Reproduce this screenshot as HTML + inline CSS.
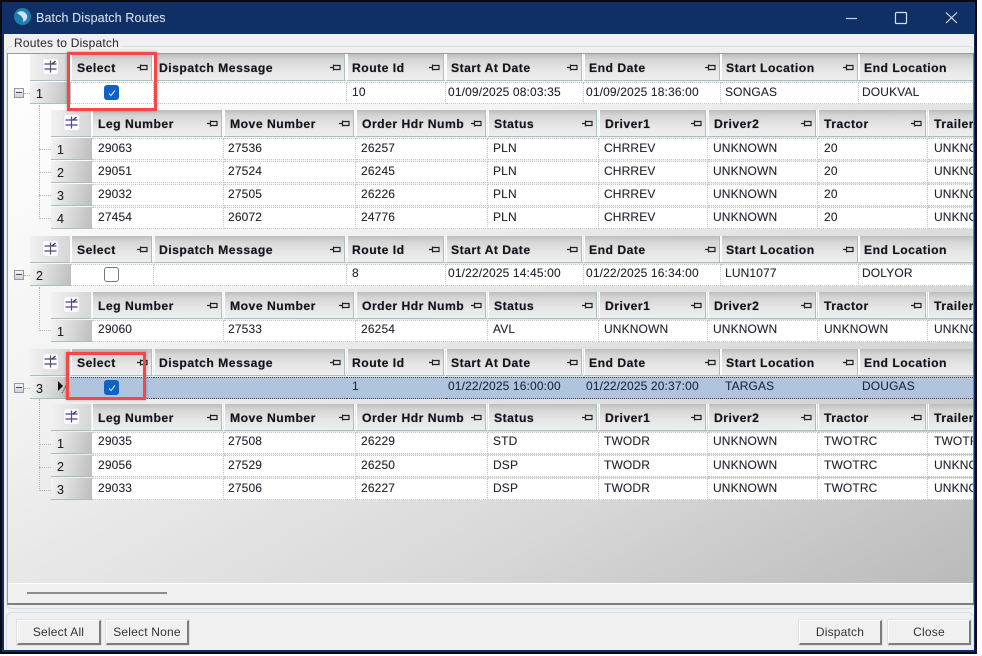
<!DOCTYPE html>
<html><head><meta charset="utf-8"><title>Batch Dispatch Routes</title>
<style>
html,body{margin:0;padding:0;background:#fff}
body{width:982px;height:656px;overflow:hidden;position:relative;font-family:"Liberation Sans",Arial,sans-serif;font-size:12px;color:#222}
div,span,svg{position:absolute;box-sizing:border-box}
#win{left:0;top:0;width:977px;height:654px;background:#f0f0f0;border:2px solid #0a0a14;overflow:hidden}
#win:before{content:"";position:absolute;left:0;top:0;bottom:0;width:2px;background:#0f2f66}
#win:after{content:"";position:absolute;right:0;top:0;bottom:0;width:1px;background:#0f2f66}
#bot{left:0;right:0;bottom:0;height:2px;background:#0f2f66;z-index:3}
#tb{left:0;top:0;right:0;height:32px;background:#0f2f66;z-index:2}
#ttl{left:34px;top:9px;font-size:12.5px;color:#d7dfea;white-space:nowrap;letter-spacing:.12px;text-shadow:0 0 .6px rgba(215,223,234,.5)}
#gb1{left:4px;top:44px;width:968px;height:563px;border:1px solid #d5dfe6;border-radius:5px}
#lbl{left:10px;top:34px;background:#f0f0f0;padding:0 2px;font-size:12px;line-height:14px;white-space:nowrap;letter-spacing:.2px;color:#333;z-index:1;text-shadow:0 0 .5px rgba(50,50,50,.4)}
#gb2{left:4px;top:610px;width:968px;height:50px;border:1px solid #d5dfe6;border-radius:6px}
#grid{left:5px;top:51px;width:968px;height:552px;background:#f0f0f0;border:1px solid #6f6f6f;border-width:1px 2px 2px 1px;border-color:#9a9a9a #808080 #808080 #9a9a9a;overflow:hidden}
#bg{left:0;top:0;right:0;bottom:20px;background:linear-gradient(150deg,#ffffff 0%,#f4f4f4 30%,#d8d8d8 72%,#bababa 100%)}
#sb{left:0;right:0;bottom:0;height:20px;background:#f0f0f0;border-top:1px solid #fff}
#th{left:19px;top:8px;width:140px;height:2px;background:#8c8c8c}
.ph,.cp,.rp,.rc{left:0;width:966px;height:0}
.hc{top:0;height:26px;background:linear-gradient(#bdbdbd 0,#d6d6d6 6px,#e6e6e6 16px,#eeeeee 26px);border-right:1px solid #fff;border-left:1px solid #fff;box-shadow:0 1px 0 #a7c0bf,inset -1px 0 0 #a9c0c0;font-weight:bold;font-size:12.2px;letter-spacing:.48px;line-height:28px;padding-left:5px;white-space:nowrap;color:#14141c;overflow:hidden;text-shadow:0 0 .7px rgba(20,20,28,.7)}
.hc svg{right:4px;top:10px;width:11px;height:7px}
.ch{top:0;height:26px;background:linear-gradient(90deg,#f1f1f1,#d6d6d6);box-shadow:0 1px 0 #a7c0bf}
.ch svg{left:12px;top:4px;width:17px;height:17px}
.ph .ch{left:22px;width:40px}
.cp .ch{left:43px;width:40px}
.ph .hc:nth-of-type(2){left:63px;width:82px}
.ph .hc:nth-of-type(3){left:146px;width:192px;padding-left:4px}
.ph .hc:nth-of-type(4){left:339px;width:98px;padding-left:4px}
.ph .hc:nth-of-type(5){left:438px;width:137px;padding-left:4px}
.ph .hc:nth-of-type(6){left:576px;width:137px;padding-left:4px}
.ph .hc:nth-of-type(7){left:713px;width:138px;padding-left:4px}
.ph .hc:nth-of-type(8){left:851px;width:120px;padding-left:4px}
.cp .hc:nth-of-type(2){left:84px;width:131px}
.cp .hc:nth-of-type(3){left:216px;width:131px}
.cp .hc:nth-of-type(4){left:348px;width:131px}
.cp .hc:nth-of-type(5){left:480px;width:110px}
.cp .hc:nth-of-type(6){left:591px;width:108px}
.cp .hc:nth-of-type(7){left:700px;width:109px}
.cp .hc:nth-of-type(8){left:810px;width:109px}
.cp .hc:nth-of-type(9){left:920px;width:60px}
.dc{top:0;height:22px;background:#fff;border:1px dotted #c6c6c6;border-left:0;line-height:18px;padding-left:2px;font-size:12px;letter-spacing:.14px;white-space:nowrap;overflow:hidden;color:#23232e;text-shadow:0 0 .5px rgba(35,35,46,.45)}
.rh{top:0;height:21px;background:linear-gradient(100deg,#f4f4f4,#bdbdbd);box-shadow:0 1px 0 #a7c0bf;font-size:12.5px;line-height:24px;padding-left:6px;color:#222;text-shadow:0 0 .5px rgba(35,35,46,.45)}
.rp .rh{left:22px;width:41px}
.rc .rh{left:43px;width:41px}
.rp .dc{padding-left:3px;line-height:16px}
.rp.first .dc{line-height:18px}
.rp .dc:nth-of-type(2){left:63px;width:83px}
.rp .dc:nth-of-type(3){left:146px;width:193px}
.rp .dc:nth-of-type(4){left:339px;width:99px;padding-left:5px}
.rp .dc:nth-of-type(5){left:438px;width:138px;padding-left:2px}
.rp .dc:nth-of-type(6){left:576px;width:137px;padding-left:2px}
.rp .dc:nth-of-type(7){left:713px;width:138px;padding-left:4px}
.rp .dc:nth-of-type(8){left:851px;width:120px}
.rc .dc{padding-left:5px}
.rc .dc:nth-of-type(2){left:84px;width:132px;padding-left:6px}
.rc .dc:nth-of-type(3){left:216px;width:132px;padding-left:4px}
.rc .dc:nth-of-type(4){left:348px;width:132px}
.rc .dc:nth-of-type(5){left:480px;width:111px}
.rc .dc:nth-of-type(6){left:591px;width:109px}
.rc .dc:nth-of-type(7){left:700px;width:110px}
.rc .dc:nth-of-type(8){left:810px;width:110px;padding-left:6px}
.rc .dc:nth-of-type(9){left:920px;width:60px;padding-left:6px}
.rc.up .dc{line-height:17px}
.sel .dc{background:#b0c4de;border:1px dotted #444;border-width:1px 0;color:#1c2a44}
.chk{left:33px;top:2px;width:15px;height:15px;border-radius:3px}
.on{background:#0f62c4}
.off{background:#fff;border:1.5px solid #777;border-radius:3px}
.chk svg{left:3.500px;top:3.500px;width:8px;height:8px}
.exp{left:6px;width:10px;height:10px;background:linear-gradient(#f4f4f4,#d2d2d2);border:1px solid #8f9aa5}
.exp:after{content:"";position:absolute;left:1px;top:3px;width:6px;height:1px;background:#33506f}
.v,.hl{border:0 dotted #b4b4b4}
.v{width:0;border-left-width:1px;left:31px}
.hl{height:0;border-top-width:1px}
.red{border:3px solid #f44848;z-index:5;box-shadow:0 0 3px rgba(0,0,0,.3)}
.btn{height:25px;top:618px;background:#f0f0f0;border:1px solid #fff;border-right:2px solid #7d7d7d;border-bottom:2px solid #7d7d7d;box-shadow:0 0 0 .5px #cfcfcf;font-size:12px;text-align:center;line-height:23px;letter-spacing:.2px;color:#333}
</style></head><body>
<svg width="0" height="0" style="left:0;top:0"><defs>
<symbol id="pin" viewBox="0 0 11 7"><path d="M0 3.500H3.500M3.500 .5V6.500M3.500 1.500H10V5.500H3.500" fill="none" stroke="#222" stroke-width="1.200"/></symbol>
<symbol id="cho" viewBox="0 0 17 17"><rect x=".5" y=".5" width="16" height="16" rx="3" fill="#fbfbff" stroke="#e2e2ea"/><path d="M2.500 6H14.500M2.500 11H14.500" stroke="#6a5fa6" stroke-width="1.400"/><path d="M8.500 2.500V14.500" stroke="#555" stroke-width="1.200"/><path d="M10 6L13.500 3" stroke="#333" stroke-width="1.200"/></symbol>
<symbol id="tick" viewBox="0 0 8 8"><path d="M1 4.500L3 6.500L7 1.500" fill="none" stroke="#cfe2f7" stroke-width="1.100"/></symbol>
</defs></svg>
<div id="win">
<div id="tb">
<svg style="left:11px;top:5px;width:19px;height:19px" viewBox="0 0 19 19"><circle cx="9.500" cy="9.500" r="8.500" fill="#1f7eb0"/><path d="M4 6C7 3 12 4 14 8C15 11 13 14 10 15C11 12 9 9 4 6Z" fill="#cfe3ee"/></svg>
<div id="ttl">Batch Dispatch Routes</div>
<svg style="left:840px;top:8px;width:120px;height:16px" viewBox="0 0 120 16"><path d="M4 8.500H15" stroke="#c7d0dd" stroke-width="1.200"/><rect x="53.500" y="2.500" width="11" height="11" rx="1" fill="none" stroke="#d7dfea" stroke-width="1.200"/><path d="M104 2.500L115 13M115 2.500L104 13" stroke="#d7dfea" stroke-width="1.200"/></svg>
</div>
<div id="gb1"></div><div id="lbl">Routes to Dispatch</div>
<div id="gb2"></div>
<div id="grid">
<div id="bg"></div>
<div id="sb"><div id="th"></div></div>

<div class="v" style="top:51px;height:114px"></div>
<div class="hl" style="left:31px;top:95px;width:12px"></div><div class="hl" style="left:31px;top:118px;width:12px"></div><div class="hl" style="left:31px;top:141px;width:12px"></div><div class="hl" style="left:31px;top:164px;width:12px"></div>
<div class="hl" style="left:16px;top:39px;width:6px"></div>
<div class="v" style="top:233px;height:44px"></div><div class="hl" style="left:31px;top:276px;width:12px"></div>
<div class="hl" style="left:16px;top:221px;width:6px"></div>
<div class="v" style="top:345px;height:92px"></div>
<div class="hl" style="left:31px;top:390px;width:12px"></div><div class="hl" style="left:31px;top:413px;width:12px"></div><div class="hl" style="left:31px;top:436px;width:12px"></div>
<div class="hl" style="left:16px;top:334px;width:6px"></div>
<div class="exp" style="top:34px"></div><div class="exp" style="top:216px"></div><div class="exp" style="top:329px"></div>

<div class="ph" style="top:0"><div class="ch"><svg><use href="#cho"/></svg></div><div class="hc">Select<svg><use href="#pin"/></svg></div><div class="hc">Dispatch Message<svg><use href="#pin"/></svg></div><div class="hc">Route Id<svg><use href="#pin"/></svg></div><div class="hc">Start At Date<svg><use href="#pin"/></svg></div><div class="hc">End Date<svg><use href="#pin"/></svg></div><div class="hc">Start Location<svg><use href="#pin"/></svg></div><div class="hc">End Location</div></div>
<div class="rp first" style="top:28px"><div class="rh">1</div><div class="dc"><div class="chk on"><svg><use href="#tick"/></svg></div></div><div class="dc"></div><div class="dc">10</div><div class="dc">01/09/2025 08:03:35</div><div class="dc">01/09/2025 18:36:00</div><div class="dc">SONGAS</div><div class="dc">DOUKVAL</div></div>
<div class="cp" style="top:56px"><div class="ch"><svg><use href="#cho"/></svg></div><div class="hc">Leg Number<svg><use href="#pin"/></svg></div><div class="hc">Move Number<svg><use href="#pin"/></svg></div><div class="hc">Order Hdr Numb<svg><use href="#pin"/></svg></div><div class="hc">Status<svg><use href="#pin"/></svg></div><div class="hc">Driver1<svg><use href="#pin"/></svg></div><div class="hc">Driver2<svg><use href="#pin"/></svg></div><div class="hc">Tractor<svg><use href="#pin"/></svg></div><div class="hc">Trailer</div></div>
<div class="rc" style="top:84px"><div class="rh">1</div><div class="dc">29063</div><div class="dc">27536</div><div class="dc">26257</div><div class="dc">PLN</div><div class="dc">CHRREV</div><div class="dc">UNKNOWN</div><div class="dc">20</div><div class="dc">UNKNOWN</div></div>
<div class="rc" style="top:107px"><div class="rh">2</div><div class="dc">29051</div><div class="dc">27524</div><div class="dc">26245</div><div class="dc">PLN</div><div class="dc">CHRREV</div><div class="dc">UNKNOWN</div><div class="dc">20</div><div class="dc">UNKNOWN</div></div>
<div class="rc" style="top:130px"><div class="rh">3</div><div class="dc">29032</div><div class="dc">27505</div><div class="dc">26226</div><div class="dc">PLN</div><div class="dc">CHRREV</div><div class="dc">UNKNOWN</div><div class="dc">20</div><div class="dc">UNKNOWN</div></div>
<div class="rc" style="top:153px"><div class="rh">4</div><div class="dc">27454</div><div class="dc">26072</div><div class="dc">24776</div><div class="dc">PLN</div><div class="dc">CHRREV</div><div class="dc">UNKNOWN</div><div class="dc">20</div><div class="dc">UNKNOWN</div></div>

<div class="ph" style="top:182px"><div class="ch"><svg><use href="#cho"/></svg></div><div class="hc">Select<svg><use href="#pin"/></svg></div><div class="hc">Dispatch Message<svg><use href="#pin"/></svg></div><div class="hc">Route Id<svg><use href="#pin"/></svg></div><div class="hc">Start At Date<svg><use href="#pin"/></svg></div><div class="hc">End Date<svg><use href="#pin"/></svg></div><div class="hc">Start Location<svg><use href="#pin"/></svg></div><div class="hc">End Location</div></div>
<div class="rp" style="top:210px"><div class="rh">2</div><div class="dc"><div class="chk off"></div></div><div class="dc"></div><div class="dc">8</div><div class="dc">01/22/2025 14:45:00</div><div class="dc">01/22/2025 16:34:00</div><div class="dc">LUN1077</div><div class="dc">DOLYOR</div></div>
<div class="cp" style="top:238px"><div class="ch"><svg><use href="#cho"/></svg></div><div class="hc">Leg Number<svg><use href="#pin"/></svg></div><div class="hc">Move Number<svg><use href="#pin"/></svg></div><div class="hc">Order Hdr Numb<svg><use href="#pin"/></svg></div><div class="hc">Status<svg><use href="#pin"/></svg></div><div class="hc">Driver1<svg><use href="#pin"/></svg></div><div class="hc">Driver2<svg><use href="#pin"/></svg></div><div class="hc">Tractor<svg><use href="#pin"/></svg></div><div class="hc">Trailer</div></div>
<div class="rc up" style="top:266px"><div class="rh">1</div><div class="dc">29060</div><div class="dc">27533</div><div class="dc">26254</div><div class="dc">AVL</div><div class="dc">UNKNOWN</div><div class="dc">UNKNOWN</div><div class="dc">UNKNOWN</div><div class="dc">UNKNOWN</div></div>

<div class="ph" style="top:295px"><div class="ch"><svg><use href="#cho"/></svg></div><div class="hc">Select<svg><use href="#pin"/></svg></div><div class="hc">Dispatch Message<svg><use href="#pin"/></svg></div><div class="hc">Route Id<svg><use href="#pin"/></svg></div><div class="hc">Start At Date<svg><use href="#pin"/></svg></div><div class="hc">End Date<svg><use href="#pin"/></svg></div><div class="hc">Start Location<svg><use href="#pin"/></svg></div><div class="hc">End Location</div></div>
<div class="rp sel" style="top:323px"><div class="rh">3<svg style="left:27px;top:3px;width:12px;height:15px" viewBox="0 0 12 15"><path d="M1 1L6 6L1 11Z" fill="#111"/><path d="M5 13L9 6L10 13" fill="none" stroke="#333" stroke-dasharray="1 1"/></svg></div><div class="dc"><div class="chk on"><svg><use href="#tick"/></svg></div></div><div class="dc"></div><div class="dc">1</div><div class="dc">01/22/2025 16:00:00</div><div class="dc">01/22/2025 20:37:00</div><div class="dc">TARGAS</div><div class="dc">DOUGAS</div></div>
<div class="cp" style="top:350px"><div class="ch"><svg><use href="#cho"/></svg></div><div class="hc">Leg Number<svg><use href="#pin"/></svg></div><div class="hc">Move Number<svg><use href="#pin"/></svg></div><div class="hc">Order Hdr Numb<svg><use href="#pin"/></svg></div><div class="hc">Status<svg><use href="#pin"/></svg></div><div class="hc">Driver1<svg><use href="#pin"/></svg></div><div class="hc">Driver2<svg><use href="#pin"/></svg></div><div class="hc">Tractor<svg><use href="#pin"/></svg></div><div class="hc">Trailer</div></div>
<div class="rc up" style="top:378px"><div class="rh">1</div><div class="dc">29035</div><div class="dc">27508</div><div class="dc">26229</div><div class="dc">STD</div><div class="dc">TWODR</div><div class="dc">UNKNOWN</div><div class="dc">TWOTRC</div><div class="dc">TWOTRC</div></div>
<div class="rc" style="top:401px"><div class="rh">2</div><div class="dc">29056</div><div class="dc">27529</div><div class="dc">26250</div><div class="dc">DSP</div><div class="dc">TWODR</div><div class="dc">UNKNOWN</div><div class="dc">TWOTRC</div><div class="dc">UNKNOWN</div></div>
<div class="rc" style="top:424px"><div class="rh">3</div><div class="dc">29033</div><div class="dc">27506</div><div class="dc">26227</div><div class="dc">DSP</div><div class="dc">TWODR</div><div class="dc">UNKNOWN</div><div class="dc">TWOTRC</div><div class="dc">UNKNOWN</div></div>
</div>
<div class="btn" style="left:15px;width:84px">Select All</div>
<div class="btn" style="left:104px;width:83px">Select None</div>
<div class="btn" style="left:797px;width:83px">Dispatch</div>
<div class="btn" style="left:886px;width:83px">Close</div>
<div id="bot"></div>
</div>
<div class="red" style="left:67px;top:52px;width:90px;height:59px"></div>
<div class="red" style="left:66px;top:352px;width:80px;height:48px"></div>
</body></html>
